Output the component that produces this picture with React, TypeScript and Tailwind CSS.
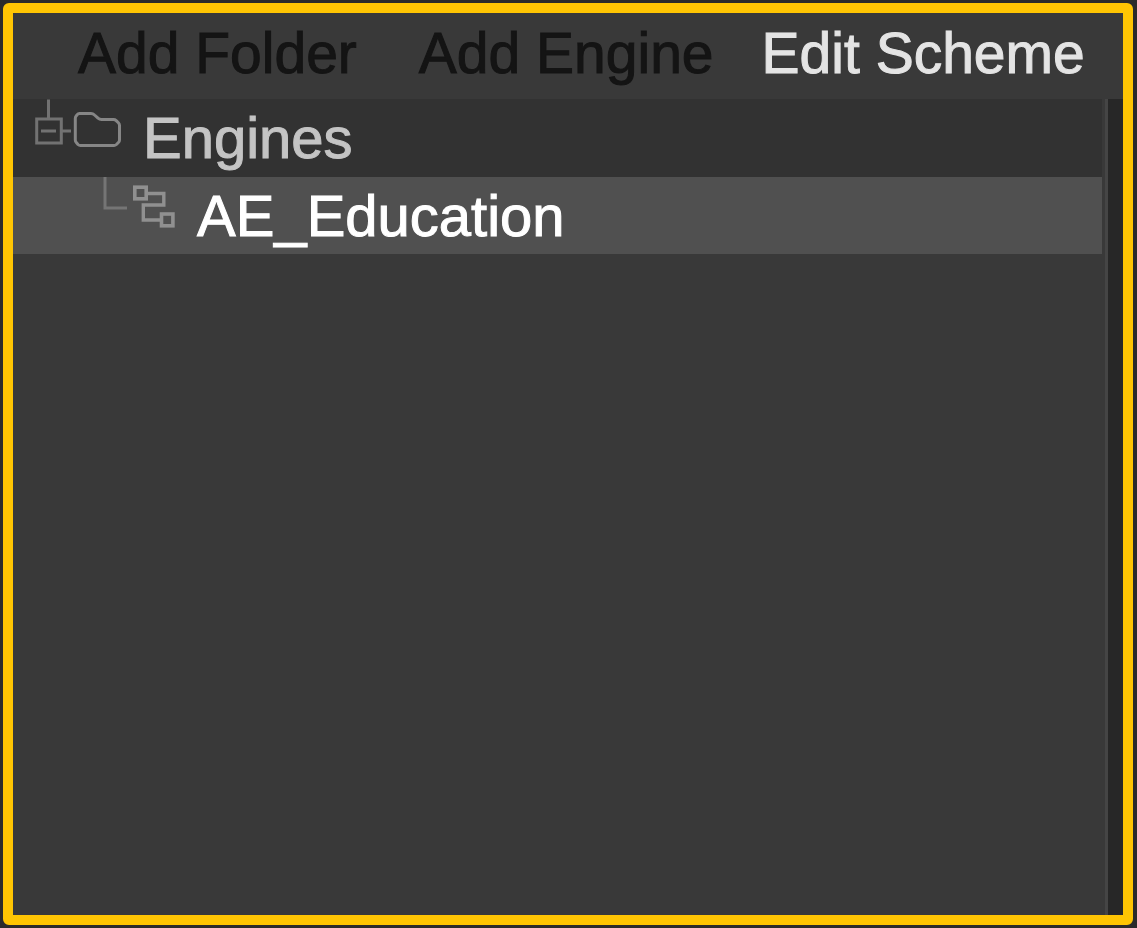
import { useState } from "react";

function ToggleIcon({ open }: { open: boolean }) {
  return (
    <svg width="38" height="78" viewBox="0 0 38 78" fill="none" stroke="#727272" strokeWidth="3" aria-hidden="true">
      <path d="M15.5 0.5V19" />
      <rect x="3.7" y="20" width="24.6" height="24" />
      <path d="M8 32H23M28 32H38" />
      {!open && <path d="M15.5 25.5V38.5" />}
    </svg>
  );
}

function FolderIcon() {
  return (
    <svg width="52" height="78" viewBox="0 0 52 78" fill="none" stroke="#868686" strokeWidth="3" strokeLinejoin="round" aria-hidden="true">
      <path d="M8.5 14.5H20Q22 14.5 23.5 16L27 19.2Q28.5 20.5 30.5 20.5H42.5Q44 20.5 45.2 21.6L47.4 23.8Q48.5 25 48.5 26.5V41Q48.5 42.5 47.4 43.5L45.4 45.5Q44.3 46.5 43 46.5H9.5Q8 46.5 7 45.5L5.3 43.5Q4.3 42.5 4.3 41V19.5Q4.3 18 5.3 16.8L6.2 15.6Q7 14.5 8.5 14.5Z" />
    </svg>
  );
}

function BranchLine() {
  return (
    <svg width="26" height="77" viewBox="0 0 26 77" fill="none" stroke="#757575" strokeWidth="3" aria-hidden="true">
      <path d="M2 0V31H24" />
    </svg>
  );
}

function EngineIcon() {
  return (
    <svg width="44" height="77" viewBox="0 0 44 77" fill="none" stroke="#909090" strokeWidth="3.6" aria-hidden="true">
      <rect x="1.8" y="10.2" width="11.4" height="11.6" />
      <rect x="28.5" y="37" width="11.4" height="11.8" />
      <path d="M15 16.5H30.8V28H10.3V43H27" strokeWidth="3.4" />
    </svg>
  );
}

export default function App() {
  const [open, setOpen] = useState(true);

  return (
    <div className="flex min-h-screen bg-[#2b2b2b] p-[3px] pr-1 font-['Liberation_Sans',Arial,sans-serif] leading-[64px] whitespace-nowrap [-webkit-text-stroke:1px_currentColor]">
      <main className="flex min-w-0 flex-1 flex-col overflow-hidden rounded-md border-10 border-[#ffc503] bg-[#393939]">
        <header className="flex h-[86px] shrink-0 items-center gap-12 pb-1.5 pl-[65px] text-[57px] leading-[64px]">
          <div className="flex gap-[62px]">
            <button type="button" disabled className="text-[#141414]">
              Add Folder
            </button>
            <button type="button" disabled className="text-[#141414]">
              Add Engine
            </button>
          </div>
          <button type="button" className="text-[#e4e4e4]">
            Edit Scheme
          </button>
        </header>

        <div className="flex flex-1">
          <ul className="min-w-0 flex-1 text-[58px] leading-[64px]">
            <li>
              <div className="flex h-[78px] items-center bg-[#323232] pl-5">
                <button
                  type="button"
                  aria-label="Toggle Engines"
                  aria-expanded={open}
                  onClick={() => setOpen(!open)}
                >
                  <ToggleIcon open={open} />
                </button>
                <button type="button" className="flex items-center gap-5 text-[#c4c4c4]">
                  <FolderIcon />
                  Engines
                </button>
              </div>
              {open && (
                <ul>
                  <li className="flex h-[77px] items-center bg-[#505050] pl-[90px]">
                    <BranchLine />
                    <button type="button" className="flex items-center gap-5 pl-1 text-white">
                      <EngineIcon />
                      AE_Education
                    </button>
                  </li>
                </ul>
              )}
            </li>
          </ul>
          <div className="ml-[3px] w-[3px] bg-[#454545]" />
          <div className="w-[15px] bg-[#272727]" />
        </div>
      </main>
    </div>
  );
}
